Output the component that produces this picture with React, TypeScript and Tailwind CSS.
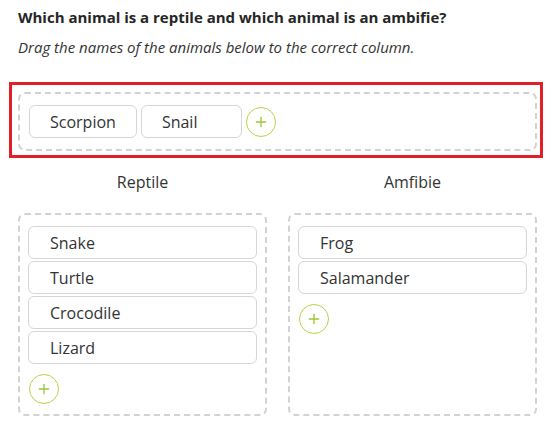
import { Plus } from 'lucide-react';

const reptiles = ['Snake', 'Turtle', 'Crocodile', 'Lizard'];
const amphibians = ['Frog', 'Salamander'];
const pool = ['Scorpion', 'Snail'];

function AddButton() {
    return (
        <button className="flex h-[30px] w-[30px] items-center justify-center rounded-full border-[1.5px] border-[#b5d449] bg-white text-[#9cc63a]">
            <Plus size={16} strokeWidth={2} />
        </button>
    );
}

function Column({ title, items }: { title: string; items: string[] }) {
    return (
        <div className="flex flex-1 flex-col">
            <p className="h-[41px] pt-[12px] text-center text-[16px] text-[#333]">{title}</p>
            <div className="mt-[14px] flex h-[203px] flex-col rounded-[7px] border-2 border-dashed border-[#d2d2d2] px-[8px] pt-[11px]">
                <div className="flex flex-col gap-[2px]">
                    {items.map((item) => (
                        <div key={item} className="flex h-[33px] items-center rounded-[6px] border border-[#d6d6d6] px-[21px] text-[16px] text-[#333]">
                            {item}
                        </div>
                    ))}
                </div>
                <div className="mt-[10px] pl-[1px]">
                    <AddButton />
                </div>
            </div>
        </div>
    );
}

export default function App() {
    return (
        <div className="min-h-screen bg-white pb-[9px]" style={{ fontFamily: '"Open Sans", sans-serif' }}>
            <div className="px-[18px] pt-[6px]">
                <h1 className="text-[15px] font-bold leading-[22px] text-[#262626]">Which animal is a reptile and which animal is an ambifie?</h1>
                <p className="mt-[9px] text-[15px] italic leading-[20px] text-[#333]">Drag the names of the animals below to the correct column.</p>
            </div>

            <div className="mx-[9px] mt-[25px] border-[3px] border-[#e41e26] pb-[4px] pl-[6px] pr-[3px] pt-[7px]">
                <div className="flex h-[59px] items-center gap-[4px] rounded-[7px] border-2 border-dashed border-[#d2d2d2] pl-[9px]">
                    {pool.map((item) => (
                        <div key={item} className="flex h-[33px] min-w-[101px] items-center rounded-[6px] border border-[#d6d6d6] px-[20px] text-[16px] text-[#333]">
                            {item}
                        </div>
                    ))}
                    <AddButton />
                </div>
            </div>

            <div className="flex gap-[21px] pl-[18px] pr-[15px]">
                <Column title="Reptile" items={reptiles} />
                <Column title="Amfibie" items={amphibians} />
            </div>
        </div>
    );
}
